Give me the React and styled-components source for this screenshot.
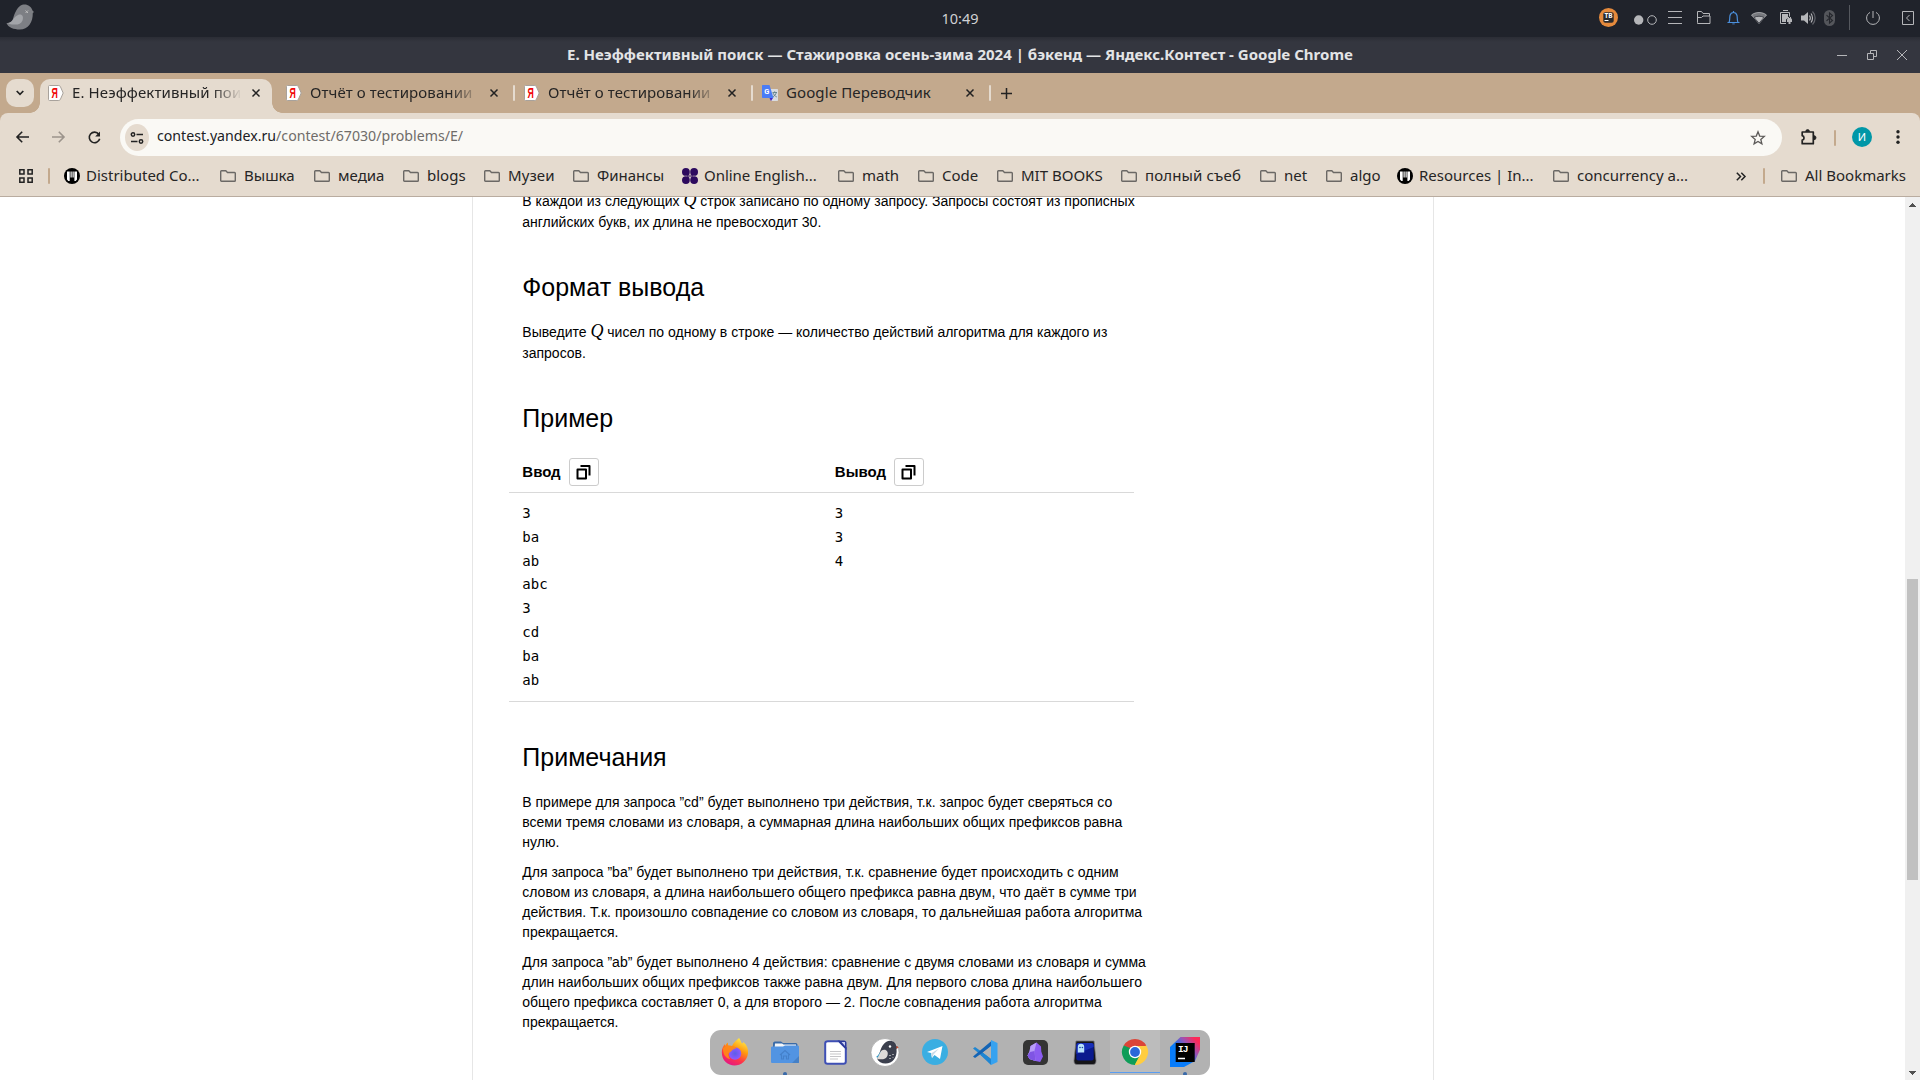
import React from "react";
import styled, { createGlobalStyle, css } from "styled-components";

const UI_FONT = '"Noto Sans", sans-serif';
const TAN = "#c3a98d";
const BEIGE = "#e5dbcf";

const GlobalStyle = createGlobalStyle`
  * { box-sizing: border-box; }
  html, body { margin: 0; padding: 0; overflow: hidden; background: #fff; }
  svg { display: block; flex: none; overflow: visible; }
`;

const Screen = styled.div`
  width: 1920px;
  height: 1080px;
  display: flex;
  flex-direction: column;
  overflow: hidden;
  position: relative;
  background: #fff;
  font-family: ${UI_FONT};
`;

/* ---------- desktop panel ---------- */
const Panel = styled.header`
  height: 37px;
  flex: none;
  display: grid;
  grid-template-columns: 1fr auto 1fr;
  align-items: center;
  padding-bottom: 2px;
  background: #20232b;
  color: #d0d1d4;
`;
const PanelStart = styled.div`
  padding: 0 0 3px 6px;
`;
const Clock = styled.div`
  font-size: 14.5px;
  line-height: 20px;
`;
const Tray = styled.div`
  display: flex;
  justify-content: flex-end;
  align-items: center;
  height: 35px;
`;
const TraySlot = styled.div`
  width: ${(p) => p.$w}px;
  margin-left: ${(p) => p.$ml}px;
  display: flex;
  justify-content: center;
`;
const TrayLine = styled.div`
  width: 1px;
  height: 25px;
  background: #55585e;
`;

/* ---------- window title ---------- */
const TitleBar = styled.div`
  height: 36px;
  flex: none;
  display: grid;
  grid-template-columns: 1fr auto 1fr;
  align-items: center;
  padding-bottom: 1px;
  background: linear-gradient(#2b2d35, #34363f 5px);
  color: #e3e4e6;
`;
const WindowTitle = styled.div`
  grid-column: 2;
  font-size: 15px;
  font-weight: 700;
  line-height: 20px;
  padding-bottom: 1px;
  white-space: nowrap;
`;
const WindowButtons = styled.div`
  display: flex;
  justify-content: flex-end;
  gap: 20px;
  padding-right: 13px;
`;

/* ---------- tab strip ---------- */
const TabStrip = styled.div`
  height: 40px;
  flex: none;
  display: flex;
  padding: 6px 0 0 6px;
  background: ${TAN};
`;
const TabSearch = styled.div`
  width: 28px;
  height: 28px;
  margin-right: 6px;
  border-radius: 10px;
  background: ${BEIGE};
  display: flex;
  align-items: center;
  justify-content: center;
`;
const flare = css`
  content: "";
  position: absolute;
  bottom: 0;
  width: 10px;
  height: 10px;
`;
const Tab = styled.div`
  position: relative;
  width: ${(p) => (p.$active ? 232 : 238)}px;
  margin-right: ${(p) => (p.$active ? 6 : 0)}px;
  height: 34px;
  padding: 0 8px 6px;
  display: flex;
  align-items: center;
  color: #262525;
  font-size: 15px;
  letter-spacing: 0.1px;
  ${(p) =>
    p.$active &&
    css`
      background: ${BEIGE};
      border-radius: 10px 10px 0 0;
      &::before {
        ${flare}
        left: -10px;
        background: radial-gradient(circle at 0 0, transparent 9.5px, ${BEIGE} 10px);
      }
      &::after {
        ${flare}
        right: -10px;
        background: radial-gradient(circle at 100% 0, transparent 9.5px, ${BEIGE} 10px);
      }
    `}
`;
const TabTitle = styled.div`
  width: 168px;
  margin-left: 8px;
  padding-bottom: 2px;
  overflow: hidden;
  white-space: nowrap;
  line-height: 20px;
  mask-image: ${(p) => (p.$fade ? "linear-gradient(90deg, #000 140px, transparent 170px)" : "none")};
`;
const TabClose = styled.div`
  width: 16px;
  display: flex;
  justify-content: center;
  margin-left: 8px;
`;
const TabLine = styled.div`
  width: 2px;
  height: 16px;
  margin-left: auto;
  margin-right: -7px;
  border-radius: 1px;
  background: ${BEIGE};
`;
const NewTab = styled.div`
  width: 28px;
  height: 28px;
  display: flex;
  align-items: center;
  justify-content: center;
`;

/* ---------- toolbar ---------- */
const ToolbarBack = styled.div`
  flex: none;
  background: ${TAN};
`;
const Toolbar = styled.div`
  height: 43px;
  display: flex;
  align-items: center;
  padding: 6px 0 0 4px;
  background: ${BEIGE};
  border-radius: 8px 8px 0 0;
`;
const ToolButton = styled.div`
  width: ${(p) => p.$w || 36}px;
  padding-bottom: 1px;
  display: flex;
  justify-content: center;
`;
const Omnibox = styled.div`
  width: 1662px;
  height: 37px;
  margin-left: 8px;
  border-radius: 19px;
  background: #faf9f5;
  display: flex;
  align-items: center;
  padding: 0 16px 0 5px;
`;
const SiteInfo = styled.div`
  width: 24px;
  height: 27px;
  border-radius: 50%;
  background: ${BEIGE};
  display: flex;
  align-items: center;
  justify-content: center;
`;
const Url = styled.div`
  flex: 1;
  margin-left: 8px;
  padding-bottom: 3px;
  font-size: 14.16px;
  line-height: 20px;
  color: #202124;
  white-space: nowrap;
`;
const UrlPath = styled.span`
  color: #6f6c69;
`;
const Divider = styled.div`
  width: 2px;
  height: 16px;
  border-radius: 1px;
  background: ${TAN};
`;
const Avatar = styled.div`
  width: 20px;
  height: 20px;
  margin: 0 15px 1px 16px;
  border-radius: 50%;
  background: #0097a7;
  color: #fff;
  font-size: 11px;
  line-height: 20px;
  text-align: center;
`;

/* ---------- bookmarks ---------- */
const Bookmarks = styled.div`
  height: 41px;
  flex: none;
  display: flex;
  align-items: center;
  padding-left: 19px;
  background: ${BEIGE};
  border-bottom: 1px solid #b9aca0;
  color: #262525;
`;
const BookmarkDivider = styled(Divider)`
  margin: 0 ${(p) => p.$after}px 0 ${(p) => p.$before}px;
`;
const Bookmark = styled.div`
  width: ${(p) => p.$w}px;
  display: flex;
  align-items: center;
  gap: ${(p) => p.$gap}px;
  font-size: 15px;
  line-height: 20px;
  letter-spacing: ${(p) => p.$spacing || 0}px;
  white-space: nowrap;
`;
const BookmarkLabel = styled.span`
  padding-bottom: 2px;
`;

/* ---------- page ---------- */
const Viewport = styled.main`
  flex: 1;
  min-height: 0;
  display: flex;
  justify-content: space-between;
  overflow: hidden;
`;
const PageColumn = styled.div`
  width: 962px;
  margin-left: 472px;
  padding-left: 35px;
  border: solid #e6e6e6;
  border-width: 0 1px;
`;
const Statement = styled.article`
  width: 626px;
  margin-top: -6px;
  font-family: "Liberation Sans", Arial, sans-serif;
  font-size: 14px;
  color: #000;
`;
const Para = styled.p`
  margin: ${(p) => (p.$next ? 10 : 0)}px 0 0 14.3px;
  line-height: 20px;
`;
const Line = styled.span`
  display: block;
  height: ${(p) => (p.$tall ? 21 : 20)}px;
  white-space: nowrap;
`;
const MathVar = styled.span`
  font-family: "Liberation Serif", serif;
  font-style: italic;
  font-size: 18px;
  line-height: 0;
`;
const Heading = styled.h2`
  margin: 40px 0 20px 14.3px;
  font-size: 25px;
  line-height: 30px;
  font-weight: 400;
`;
const Sample = styled.div`
  margin-left: 1px;
  width: 625px;
  border-bottom: 1px solid #d9d9d9;
`;
const SampleHead = styled.div`
  display: grid;
  grid-template-columns: 1fr 1fr;
  padding: 5px 0 6px;
  border-bottom: 1px solid #d9d9d9;
`;
const SampleTitle = styled.div`
  display: flex;
  align-items: center;
  gap: 8px;
  padding-left: 13.3px;
  font-weight: 700;
  font-size: 15px;
  line-height: 18px;
`;
const CopyButton = styled.button`
  width: 30px;
  height: 28px;
  padding: 0;
  border: 1px solid #ccc;
  border-radius: 3px;
  background: #fff;
  display: flex;
  align-items: center;
  justify-content: center;
`;
const SampleBody = styled.div`
  display: grid;
  grid-template-columns: 1fr 1fr;
  height: 208px;
  padding-top: 9px;
`;
const Code = styled.pre`
  margin: 0;
  padding-left: 13.3px;
  font-family: "DejaVu Sans Mono", monospace;
  font-size: 14px;
  line-height: 23.8px;
`;
const ScrollBar = styled.div`
  width: 15px;
  padding: 6px 0 5px;
  background: #f0f0f0;
  display: flex;
  flex-direction: column;
  align-items: center;
`;
const Thumb = styled.div`
  width: 11px;
  height: 301px;
  margin: 372px 0 auto;
  background: #c1c1c1;
`;

/* ---------- dock ---------- */
const Dock = styled.nav`
  position: absolute;
  left: 710px;
  top: 1030px;
  width: 500px;
  height: 45px;
  border-radius: 11px;
  overflow: hidden;
  background: #b2b2b2;
  display: flex;
`;
const DockItem = styled.div`
  position: relative;
  width: 50px;
  height: 45px;
  padding-bottom: 1px;
  display: flex;
  align-items: center;
  justify-content: center;
  background: ${(p) => (p.$active ? "#bcbcbc" : "transparent")};
  &::after {
    content: "";
    position: absolute;
    display: ${(p) => (p.$active || p.$running ? "block" : "none")};
    left: ${(p) => (p.$active ? 0 : 23)}px;
    bottom: ${(p) => (p.$active ? 2 : -1)}px;
    width: ${(p) => (p.$active ? 50 : 4)}px;
    height: ${(p) => (p.$active ? 1 : 4)}px;
    border-radius: ${(p) => (p.$active ? 0 : 2)}px;
    background: ${(p) => (p.$active ? "#5a9df0" : "#3a6aa8")};
  }
`;

/* ---------- icons ---------- */
const BirdMenu = () => (
  <svg width="28" height="30" viewBox="0 0 28 30">
    <path d="M14 5c5-3.500 11-.5 12.500 4.500L28 11l-1.200 1c.2 9-4.500 16.500-13 16.500C8 28.500 2 26.500.5 22c4 .5 5.500-1 6.500-4C8 14 10 8 14 5z" fill="#7d7f84" />
    <path d="M12 14c4-1.500 6 1.500 4.500 5.500-1.500 3.500-5 4.500-9 4-2 0-4-.5-5.500-1.500 5-.5 5-6 10-8z" fill="#a3a5a9" />
    <path d="M19.500 9.500l2.500 2.500m0-2.500l-2.500 2.500" stroke="#bbb" strokeWidth="1" />
  </svg>
);
const stroke = { fill: "none", stroke: "#b5b6b9", strokeWidth: 1 };
const Toolbox = () => (
  <svg width="19" height="19" viewBox="0 0 19 19">
    <circle cx="9.500" cy="9.500" r="9.500" fill="#e58a3c" />
    <rect x="4.300" y="4.300" width="10.400" height="10.400" rx="2" fill="#2a2a2c" />
    <text x="9.600" y="10" fontSize="6.500" fontWeight="700" fill="#fff" textAnchor="middle" fontFamily="Noto Sans">TB</text>
    <path d="M5.500 12.500h4" stroke="#fff" />
  </svg>
);
const Desktops = () => (
  <svg width="23" height="14" viewBox="0 0 23 14">
    <circle cx="4.700" cy="9" r="4.700" fill="#b5b6b9" />
    <circle cx="18" cy="9" r="4.300" {...stroke} />
  </svg>
);
const Burger = () => (
  <svg width="14" height="14" viewBox="0 0 14 14"><path d="M0 .5h14M0 6.500h14M0 12.500h14" {...stroke} /></svg>
);
const TrayFolder = () => (
  <svg width="14" height="13" viewBox="0 0 14 13">
    <path d="M.5 11.500V.5h4l1.500 2h6.500v2.500M.5 11.500v1h12.500v-7.500H6L4.500 6.500H.5" {...stroke} />
  </svg>
);
const Bell = () => (
  <svg width="13" height="14" viewBox="0 0 13 14">
    <path d="M.5 11.500h12M2 11.500C3 9.500 2.500 7 3 4.500 3.500 2.500 5 1.500 6.500 1.500S9.500 2.500 10 4.500c.5 2.500 0 5 1 7M6.500 0v1.500" fill="none" stroke="#4a8fdc" strokeWidth="1.200" />
    <path d="M5.300 12.500h2.400v.8H5.300z" fill="#4a8fdc" />
  </svg>
);
const Wifi = () => (
  <svg width="16" height="12" viewBox="0 0 16 12">
    <path d="M.5 3C4.500-.3 11.500-.3 15.500 3L8 11.500z" fill="#77797e" stroke="#b5b6b9" strokeWidth=".8" />
    <path d="M3 5.500C6 3.800 10 3.800 13 5.500L8 11.200z" fill="#b5b6b9" stroke="#20232b" strokeWidth=".7" />
  </svg>
);
const Battery = () => (
  <svg width="13" height="15" viewBox="0 0 13 15">
    <path d="M3 .5h5M.5 2.500h9v4M.5 2.500v11H6" {...stroke} />
    <path d="M2 4h6v4L6 9.500V12H2z" fill="#b5b6b9" />
    <path d="M7 9.500L8 8v-1h1v1h1V7h1v1l1 1.500V12h-1.500v2h-2v-2H7z" fill="#b5b6b9" />
  </svg>
);
const Volume = () => (
  <svg width="15" height="14" viewBox="0 0 15 14">
    <path d="M0 4.500h3L7 1v12L3 9.500H0z" fill="#b5b6b9" />
    <path d="M8.500 4.500c1 1.500 1 3.500 0 5M10 2.500c2 2.500 2 6.500 0 9" {...stroke} strokeWidth="1.200" />
    <path d="M11.500.5c3.500 3.500 3.500 9.500 0 13" fill="none" stroke="#606269" strokeWidth="1.200" />
  </svg>
);
const Bluetooth = () => (
  <svg width="11" height="16" viewBox="0 0 11 16">
    <rect width="11" height="16" rx="5.500" fill="#54565b" />
    <path d="M2.500 5.200l6 5.300-3 2.500V3l3 2.500-6 5.300" fill="none" stroke="#24262c" strokeWidth="1.100" />
  </svg>
);
const Power = () => (
  <svg width="14" height="14" viewBox="0 0 14 14">
    <path d="M7 0v7M4 1.500C1.800 2.500.6 4.600.6 7a6.400 6.400 0 0 0 12.800 0C13.400 4.600 12.200 2.500 10 1.500" {...stroke} />
  </svg>
);
const BoxArrow = () => (
  <svg width="12" height="14" viewBox="0 0 12 14"><path d="M.5.500h11v13H.5zM7.500 4L4.500 7l3 3" {...stroke} /></svg>
);

const Chevron = () => (
  <svg width="8" height="6" viewBox="0 0 8 6"><path d="M.7 1L4 4.300 7.300 1" fill="none" stroke="#222" strokeWidth="1.700" /></svg>
);
const YaIcon = () => (
  <svg width="16" height="16" viewBox="0 0 16 16">
    <path d="M1.500.5h9.300c.8 0 1.200.4 1.600 1.200l2.800 6.300-2.800 6.300c-.4.8-.8 1.200-1.600 1.200H1.500c-.6 0-1-.4-1-1v-13c0-.6.4-1 1-1z" fill="#fff" stroke="#a8a29c" />
    <text x="3.400" y="13.200" fontSize="15" fontWeight="700" fill="#f00a0a" textLength="6.400" lengthAdjust="spacingAndGlyphs" fontFamily="Liberation Sans">Я</text>
  </svg>
);
const TranslateIcon = () => (
  <svg width="16" height="16" viewBox="0 0 16 16">
    <path d="M6 4h9c.6 0 1 .4 1 1v10c0 .6-.4 1-1 1H9.500z" fill="#dadce0" />
    <path d="M10.500 7.500h4.500M12.700 6.300v1.200M14.300 7.500c-.5 2-1.800 3.500-3.500 4.300M11 8c.8 1.800 2 3 3.800 4" fill="none" stroke="#5f7f8a" strokeWidth=".9" />
    <path d="M7.500 13h3.500l-2 3z" fill="#4527c8" />
    <path d="M1 0h6.500L11.500 13H1c-.6 0-1-.4-1-1V1c0-.6.400-1 1-1z" fill="#4a7cf6" />
    <text x="4.700" y="9" fontSize="7.500" fontWeight="700" fill="#fff" textAnchor="middle" fontFamily="Roboto" letterSpacing="0">G</text>
  </svg>
);
const CloseIcon = () => (
  <svg width="8" height="8" viewBox="0 0 8 8"><path d="M.5.500l7 7m0-7l-7 7" stroke="#222" strokeWidth="1.500" fill="none" /></svg>
);
const PlusIcon = () => (
  <svg width="11" height="11" viewBox="0 0 11 11"><path d="M5.500 0v11M0 5.500h11" stroke="#222" strokeWidth="1.500" /></svg>
);
const ArrowIcon = ({ forward }) => (
  <svg width="13" height="12" viewBox="0 0 13 12">
    <path d={forward ? "M0 6h11.500M6.800.8L12 6l-5.200 5.200" : "M13 6H1.500M6.200.8L1 6l5.200 5.200"} fill="none" stroke={forward ? "#9c948c" : "#222"} strokeWidth="1.600" />
  </svg>
);
const Reload = () => (
  <svg width="13" height="13" viewBox="0 0 13 13">
    <path d="M10.800 3.200A5.300 5.300 0 1 0 11.700 7.800" fill="none" stroke="#222" strokeWidth="1.600" />
    <path d="M12 .4v5H7.200z" fill="#222" />
  </svg>
);
const Tune = () => (
  <svg width="14" height="12" viewBox="0 0 14 12">
    <g fill="none" stroke="#222" strokeWidth="1.500">
      <circle cx="3" cy="2.500" r="1.700" /><path d="M6.500 2.500H13" />
      <circle cx="11" cy="9.500" r="1.700" /><path d="M1 9.500h6.500" />
    </g>
  </svg>
);
const StarIcon = () => (
  <svg width="16" height="16" viewBox="0 0 16 16">
    <path d="M8 1.800l1.700 4.300 4.600.3-3.500 3 1.100 4.500L8 11.500l-3.900 2.400 1.100-4.500-3.500-3 4.600-.3z" fill="none" stroke="#5c5a58" strokeWidth="1.300" />
  </svg>
);
const Puzzle = () => (
  <svg width="17" height="17" viewBox="0 0 17 17">
    <path d="M2.200 3h11.100v11.700H2.200v-3.500a2.300 2.300 0 0 0 0-4.500z" fill="none" stroke="#222" strokeWidth="1.700" strokeLinejoin="round" />
    <path d="M5.700 2.500a1.900 1.900 0 0 1 3.800 0zM14 6.700a1.900 1.900 0 0 1 0 4z" fill="#222" stroke="#222" strokeWidth=".8" />
  </svg>
);
const Dots = () => (
  <svg width="4" height="14" viewBox="0 0 4 14" fill="#222">
    <circle cx="2" cy="1.800" r="1.700" /><circle cx="2" cy="7" r="1.700" /><circle cx="2" cy="12.200" r="1.700" />
  </svg>
);
const Apps = () => (
  <svg width="14" height="14" viewBox="0 0 14 14">
    <path d="M.8.800h4.200v4.200H.8zM9 .8h4.200v4.200H9zM.8 9h4.200v4.200H.8zM9 9h4.200v4.200H9z" fill="none" stroke="#222" strokeWidth="1.500" />
  </svg>
);
const FolderIcon = () => (
  <svg width="16" height="12" viewBox="0 0 16 12">
    <path d="M1.500.8h4.300l1.700 1.700h7c.5 0 .8.300.8.800v7.100c0 .5-.3.800-.8.800h-13c-.5 0-.8-.3-.8-.8V1.600c0-.5.300-.8.800-.8z" fill="none" stroke="#6b6865" strokeWidth="1.400" />
  </svg>
);
const RoundSite = () => (
  <svg width="16" height="16" viewBox="0 0 16 16">
    <circle cx="8" cy="8" r="8" fill="#000" />
    <path d="M3 3.500h2.700v9.500H4.300L3 11.500zM6.500 3.500h1.200v6H6.500zM8.500 3.500h1.200v6H8.500zM10.400 3.500H13v8L11.700 13h-1.300z" fill="#fff" />
  </svg>
);
const ClubIcon = () => (
  <svg width="16" height="16" viewBox="0 0 16 16" fill="#2d0a5e">
    <circle cx="3.900" cy="3.900" r="3.900" /><circle cx="12.100" cy="3.900" r="3.900" />
    <circle cx="3.900" cy="12.100" r="3.900" /><circle cx="12.100" cy="12.100" r="3.900" />
    <path d="M5 7l1-2 2 2.500L10 5l1 2v2l-1 2-2-2.500L6 11 5 9z" opacity=".6" />
  </svg>
);
const MoreChevrons = () => (
  <svg width="10" height="9" viewBox="0 0 10 9"><path d="M.8.800l3.700 3.700L.8 8.200M5.300.8L9 4.500 5.300 8.200" fill="none" stroke="#222" strokeWidth="1.500" /></svg>
);
const CopyIcon = () => (
  <svg width="15" height="15" viewBox="0 0 15 15">
    <path d="M1.500 4.500h8.500V13.500H1.500zM4.500 1h9v9.500" fill="none" stroke="#000" strokeWidth="2" strokeLinejoin="round" />
  </svg>
);

/* ---------- dock icons ---------- */
const Firefox = () => (
  <svg width="28" height="28" viewBox="0 0 28 28">
    <defs>
      <linearGradient id="ff" x1=".8" y1="0" x2=".3" y2="1">
        <stop offset="0" stopColor="#fff44f" /><stop offset=".4" stopColor="#ff980e" /><stop offset=".7" stopColor="#ff3647" /><stop offset="1" stopColor="#e31587" />
      </linearGradient>
      <radialGradient id="ffp"><stop offset="0" stopColor="#5b5ee8" /><stop offset="1" stopColor="#9059ff" /></radialGradient>
    </defs>
    <path d="M18 0c1.500 1.500 1.500 3.500 3 5.500 1.500-.5 1.500-1.500 1.500-1.500C26 7 27.500 11 27 15.500 26 23 20 27.500 13.500 27.500S.8 22.500.8 14.500C.8 11 2 8 4 6v2c1-1.500 1.500-2.500 3-3.500v3l4 .5c1.500-4 4.500-5.500 7-8z" fill="url(#ff)" />
    <circle cx="14" cy="15.500" r="6.200" fill="url(#ffp)" />
    <path d="M2 10c3-3 6-3 9-2 2 0 4 1 4.500 2-2 1.500-4 1-5 3-1.500 2-2.500 1-3 3 0 3 1 4 2 5-5 0-8-6-7.500-11z" fill="#ff8a16" opacity=".9" />
  </svg>
);
const Files = () => (
  <svg width="28" height="23" viewBox="0 0 28 23">
    <path d="M2 3c0-1.500.5-2.500 2-2.500h6L12 2h12c1.500 0 2.500.5 2.500 2v5H2z" fill="#3a6ba8" />
    <path d="M4 2.500h7l1.500 1H25V9H3.500z" fill="#f4f6f8" />
    <path d="M0 7c0-1 .5-1.500 1.500-1.500H12l2-1h12.500c1 0 1.500.5 1.500 1.500v14.500c0 1-.5 1.500-1.500 1.500h-25C.5 22 0 21.500 0 20.500z" fill="#5294e2" />
    <path d="M28 15v6c0 .7-.3 1-1 1h-6z" fill="#4580c6" />
    <path d="M9 14l5-4.500 5 4.500M10.500 13.500V18h2v-3h3v3h2v-4.500" fill="none" stroke="#4480ca" strokeWidth="1.100" />
  </svg>
);
const Office = () => (
  <svg width="23" height="25" viewBox="0 0 23 25">
    <path d="M4 1.200h11l6.800 6.800v13.500c0 1.500-1 2.300-2.300 2.300H3.500c-1.500 0-2.300-1-2.300-2.300V3.500C1.200 2 2 1.200 4 1.200z" fill="#fff" stroke="#3e4fb5" strokeWidth="2" />
    <path d="M13.500.5H20c1.500 0 2.500 1 2.500 2.500V10z" fill="#2c3a9b" /><path d="M17.500 2h3.500v4z" fill="#c8cdf0" />
    <path d="M6 11.500h11M6 14h11M6 16.500h11M6 19h8" stroke="#c5c5c8" strokeWidth="1.100" />
  </svg>
);
const Bird = () => (
  <svg width="28" height="29" viewBox="0 0 28 29">
    <circle cx="14" cy="14.500" r="14" fill="#fff" stroke="#999" strokeWidth=".6" />
    <path d="M15 4c4.500-3 9.500-.5 10.500 4l2 1.200-2 1.500c1 8.800-4 14.800-11 14.800-4 0-7-1.500-8.500-5C9 17 9 8 15 4z" fill="#3b3f4d" />
    <path d="M25.500 8l2 1.200-2 1.500z" fill="#e5502d" />
    <circle cx="19" cy="8.500" r="1.200" fill="#fff" />
    <path d="M5 19c2-1 3-4 5.500-6l1 2-5 4.500z" fill="#2094c8" />
    <path d="M10 13c4-3 8 0 6.500 4.500-1 3.500-5 4.500-10.500 3.500z" fill="#dedbd9" />
    <path d="M18 17l1 1 1-1M21 16l1 1 1-1M18 20l1 1 1-1M21.500 19l1 1" stroke="#c7c8cc" fill="none" strokeWidth=".7" />
  </svg>
);
const Telegram = () => (
  <svg width="26" height="26" viewBox="0 0 26 26">
    <circle cx="13" cy="13" r="13" fill="#3aaee2" />
    <path d="M5 13l15.500-6-2.500 13-5.500-4-2.500 3-1-5z" fill="#fff" />
    <path d="M9 14.500l8-5-5.500 6L10 19z" fill="#c9dbe8" />
  </svg>
);
const CodeEditor = () => (
  <svg width="25" height="25" viewBox="0 0 25 25">
    <path d="M0 8.500L2 7l17 12v5.500z" fill="#1f86d2" />
    <path d="M0 16.500L2 18 19 6V.5z" fill="#1364b5" />
    <path d="M18 0l6.500 3v19L18 25z" fill="#36a2f0" />
    <path d="M18 6v13l-8-6.500z" fill="#b2b2b2" />
    <path d="M18 19l-8-6-2.500 2L18 25z" fill="#1f86d2" />
  </svg>
);
const Obsidian = () => (
  <svg width="25" height="25" viewBox="0 0 25 25">
    <rect width="25" height="25" rx="5" fill="#343434" />
    <path d="M13.500 2.500l4.500 4 .3 5 1.700 5-2.800 5.500-4.700-1-6-2-2-3.500 2-4 1-5.500z" fill="#8b5cf0" />
    <path d="M13.500 2.500l-2 8 1 10.500-6-2-2-3.500 2-4 1-5.500z" fill="#b79cf8" />
    <path d="M11.500 11l-4.500 1-2.500 3.500 2 3.500 6 2z" fill="#7f54e4" />
  </svg>
);
const Ghost = () => (
  <svg width="24" height="25" viewBox="0 0 24 25">
    <path d="M3 1h18l2 19.500c.2 2.500-1 4-3 4H4c-2 0-3.200-1.500-3-4z" fill="#151518" stroke="#77777b" strokeWidth=".8" />
    <rect x="3.300" y="3" width="17.400" height="17.500" rx="2" fill="#0a1a8e" />
    <path d="M3.300 14L20.700 7V5c0-1-1-2-2-2H5.300c-1 0-2 1-2 2z" fill="#1d37cc" opacity=".7" />
    <path d="M4.800 12.500V7a3.200 3.200 0 0 1 6.400 0v5.500z" fill="#b9e2fb" />
    <circle cx="7" cy="7.500" r=".8" fill="#1a49a0" /><circle cx="9.400" cy="7.500" r=".8" fill="#1a49a0" />
  </svg>
);
const ChromeIcon = () => (
  <svg width="26" height="26" viewBox="0 0 26 26">
    <path d="M13 13L1.700 6.500A13 13 0 0 1 24.300 6.500z" fill="#db4437" />
    <path d="M13 13L24.300 6.500A13 13 0 0 1 13 26z" fill="#ffcd40" />
    <path d="M13 13v13A13 13 0 0 1 1.700 6.500z" fill="#0f9d58" />
    <path d="M7.500 16L1.700 6.500 8 9z" fill="#0f9d58" />
    <path d="M13 7h11.500l-6 7z" fill="#ffcd40" />
    <path d="M18.300 15.800L12.700 26l-2-8z" fill="#0f9d58" />
    <path d="M18.300 15.800L13 26l5-1 4-5z" fill="#ffcd40" />
    <circle cx="13" cy="13" r="6.200" fill="#fff" /><circle cx="13" cy="13" r="4.900" fill="#2a68d8" />
  </svg>
);
const Idea = () => (
  <svg width="30" height="30" viewBox="0 0 30 30">
    <defs>
      <linearGradient id="ij" x1="0" y1=".9" x2="1" y2="0">
        <stop offset=".4" stopColor="#087cfa" /><stop offset=".65" stopColor="#9a52b4" /><stop offset=".88" stopColor="#fe2857" />
      </linearGradient>
    </defs>
    <path d="M10.500 0H30v12.500l-5 11.500L14 30H0V10z" fill="url(#ij)" />
    <rect x="5.700" y="6" width="19" height="19" fill="#000" />
    <text x="8" y="14.700" fontSize="9.500" fontWeight="700" fill="#fff" fontFamily="Liberation Mono" letterSpacing="-1">IJ</text>
    <path d="M8 21.500h7" stroke="#fff" strokeWidth="1.300" />
  </svg>
);

/* ---------- data ---------- */
const trayIcons = [
  [Toolbox, 19, 0], [Desktops, 23, 16], [Burger, 14, 11], [TrayFolder, 14, 15], [Bell, 13, 16], [Wifi, 16, 11],
  [Battery, 13, 13], [Volume, 15, 8], [Bluetooth, 11, 8], [TrayLine, 1, 14], [Power, 14, 16], [BoxArrow, 12, 22],
];
const tabs = [
  { title: "E. Неэффективный поиск", icon: YaIcon, active: true, fade: true },
  { title: "Отчёт о тестировании", icon: YaIcon, fade: true },
  { title: "Отчёт о тестировании", icon: YaIcon, fade: true },
  { title: "Google Переводчик", icon: TranslateIcon },
];
const bookmarks = [
  { label: "Distributed Co...", icon: RoundSite, w: 156, gap: 6 },
  { label: "Вышка", w: 94 },
  { label: "медиа", w: 89 },
  { label: "blogs", w: 81 },
  { label: "Музеи", w: 89, spacing: 0.1 },
  { label: "Финансы", w: 109 },
  { label: "Online English...", icon: ClubIcon, w: 156, gap: 6, spacing: -0.05 },
  { label: "math", w: 80 },
  { label: "Code", w: 79 },
  { label: "MIT BOOKS", w: 124 },
  { label: "полный съеб", w: 139, spacing: 0.13 },
  { label: "net", w: 66 },
  { label: "algo", w: 71 },
  { label: "Resources | In...", icon: RoundSite, w: 156, gap: 6 },
  { label: "concurrency a...", w: 183 },
];
const notes = [
  [
    "В примере для запроса ”cd” будет выполнено три действия, т.к. запрос будет сверяться со",
    "всеми тремя словами из словаря, а суммарная длина наибольших общих префиксов равна",
    "нулю.",
  ],
  [
    "Для запроса ”ba” будет выполнено три действия, т.к. сравнение будет происходить с одним",
    "словом из словаря, а длина наибольшего общего префикса равна двум, что даёт в сумме три",
    "действия. Т.к. произошло совпадение со словом из словаря, то дальнейшая работа алгоритма",
    "прекращается.",
  ],
  [
    "Для запроса ”ab” будет выполнено 4 действия: сравнение с двумя словами из словаря и сумма",
    "длин наибольших общих префиксов также равна двум. Для первого слова длина наибольшего",
    "общего префикса составляет 0, а для второго — 2. После совпадения работа алгоритма",
    "прекращается.",
  ],
];
const dock = [
  [Firefox], [Files, "running"], [Office], [Bird], [Telegram], [CodeEditor], [Obsidian], [Ghost], [ChromeIcon, "active"], [Idea, "running"],
];

export default function App() {
  return (
    <Screen>
      <GlobalStyle />
      <Panel>
        <PanelStart><BirdMenu /></PanelStart>
        <Clock>10:49</Clock>
        <Tray>
          {trayIcons.map(([Icon, w, ml], i) => (
            <TraySlot key={i} $w={w} $ml={ml}><Icon /></TraySlot>
          ))}
          <TraySlot $w={6} $ml={0} />
        </Tray>
      </Panel>

      <TitleBar>
        <WindowTitle>E. Неэффективный поиск — Стажировка осень-зима 2024 | бэкенд — Яндекс.Контест - Google Chrome</WindowTitle>
        <WindowButtons>
          <svg width="10" height="10"><path d="M0 5.500h10" {...stroke} /></svg>
          <svg width="10" height="10"><path d="M.5 3.500h6v6h-6zM3.500 3.500v-3h6v6h-3" {...stroke} /></svg>
          <svg width="10" height="10"><path d="M0 0l10 10M10 0L0 10" {...stroke} /></svg>
        </WindowButtons>
      </TitleBar>

      <TabStrip>
        <TabSearch><Chevron /></TabSearch>
        {tabs.map(({ title, icon: Icon, active, fade }, i) => (
          <Tab key={i} $active={active}>
            <Icon />
            <TabTitle $fade={fade}>{title}</TabTitle>
            <TabClose><CloseIcon /></TabClose>
            {!active && <TabLine />}
          </Tab>
        ))}
        <NewTab><PlusIcon /></NewTab>
      </TabStrip>

      <ToolbarBack>
        <Toolbar>
          <ToolButton><ArrowIcon /></ToolButton>
          <ToolButton><ArrowIcon forward /></ToolButton>
          <ToolButton><Reload /></ToolButton>
          <Omnibox>
            <SiteInfo><Tune /></SiteInfo>
            <Url>contest.yandex.ru<UrlPath>/contest/67030/problems/E/</UrlPath></Url>
            <StarIcon />
          </Omnibox>
          <ToolButton $w={52}><Puzzle /></ToolButton>
          <Divider />
          <Avatar>И</Avatar>
          <ToolButton $w={22}><Dots /></ToolButton>
        </Toolbar>
      </ToolbarBack>

      <Bookmarks>
        <Apps />
        <BookmarkDivider $before={15} $after={14} />
        {bookmarks.map(({ label, icon: Icon = FolderIcon, w, gap = 8, spacing }) => (
          <Bookmark key={label} $w={w} $gap={gap} $spacing={spacing}>
            <Icon /><BookmarkLabel>{label}</BookmarkLabel>
          </Bookmark>
        ))}
        <MoreChevrons />
        <BookmarkDivider $before={17} $after={16} />
        <Bookmark $w={130} $gap={8}><FolderIcon /><BookmarkLabel>All Bookmarks</BookmarkLabel></Bookmark>
      </Bookmarks>

      <Viewport>
        <PageColumn>
          <Statement>
            <Para>
              <Line $tall>В каждой из следующих <MathVar>Q</MathVar> строк записано по одному запросу. Запросы состоят из прописных</Line>
              <Line>английских букв, их длина не превосходит 30.</Line>
            </Para>
            <Heading>Формат вывода</Heading>
            <Para>
              <Line $tall>Выведите <MathVar>Q</MathVar> чисел по одному в строке — количество действий алгоритма для каждого из</Line>
              <Line>запросов.</Line>
            </Para>
            <Heading>Пример</Heading>
            <Sample>
              <SampleHead>
                <SampleTitle>Ввод<CopyButton><CopyIcon /></CopyButton></SampleTitle>
                <SampleTitle>Вывод<CopyButton><CopyIcon /></CopyButton></SampleTitle>
              </SampleHead>
              <SampleBody>
                <Code>{"3\nba\nab\nabc\n3\ncd\nba\nab"}</Code>
                <Code>{"3\n3\n4"}</Code>
              </SampleBody>
            </Sample>
            <Heading>Примечания</Heading>
            {notes.map((lines, i) => (
              <Para key={i} $next={i > 0}>
                {lines.map((line) => <Line key={line}>{line}</Line>)}
              </Para>
            ))}
          </Statement>
        </PageColumn>
        <ScrollBar>
          <svg width="7" height="4" fill="#505050"><path d="M3 0h1v1h1v1h1v1h1v1H0V3h1V2h1V1h1z" /></svg>
          <Thumb />
          <svg width="7" height="4" fill="#505050"><path d="M0 0h7v1H6v1H5v1H4v1H3V3H2V2H1V1H0z" /></svg>
        </ScrollBar>
      </Viewport>

      <Dock>
        {dock.map(([Icon, state], i) => (
          <DockItem key={i} $active={state === "active"} $running={state === "running"}><Icon /></DockItem>
        ))}
      </Dock>
    </Screen>
  );
}
